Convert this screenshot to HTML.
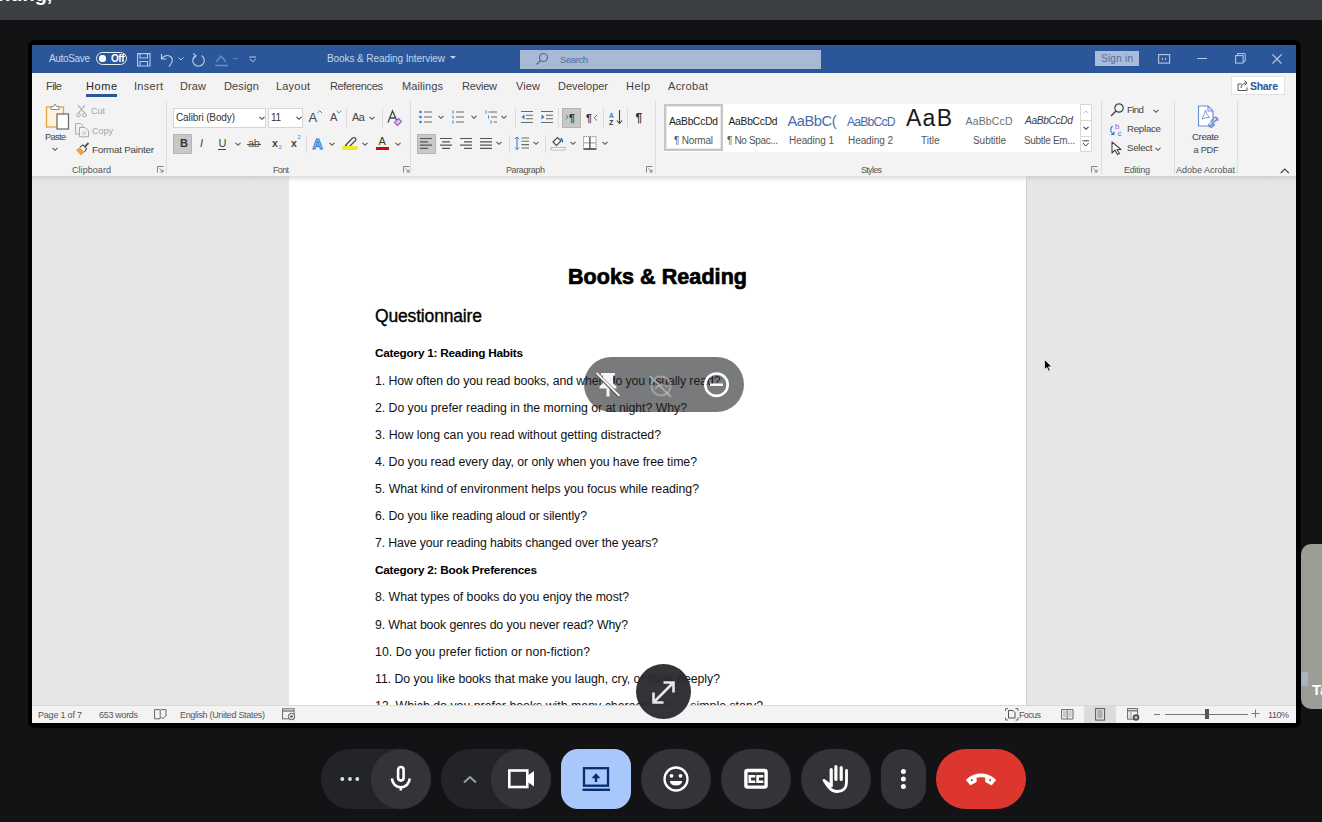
<!DOCTYPE html>
<html><head><meta charset="utf-8"><style>
html,body{margin:0;padding:0;width:1322px;height:822px;overflow:hidden;background:#131316;position:relative;font-family:"Liberation Sans",sans-serif;}
.t{position:absolute;white-space:pre;line-height:1;}
svg{position:absolute;overflow:visible;}
</style></head><body>
<div style="position:absolute;left:0px;top:0px;width:1322px;height:20px;background:#3c4043"></div>
<span class="t" style="left:-2px;top:-16.5px;font-size:20px;font-weight:bold;color:#fff;">nting,</span>
<div style="position:absolute;left:27.5px;top:40px;width:1273px;height:687.5px;background:#000;border-radius:7px"></div>
<div style="position:absolute;left:32px;top:45px;width:1264px;height:28px;background:#2b579a"></div>
<div style="position:absolute;left:32px;top:73px;width:1264px;height:103px;background:#f3f3f3"></div>
<div style="position:absolute;left:32px;top:176px;width:1264px;height:530px;background:#e6e6e6"></div>
<div style="position:absolute;left:32px;top:176px;width:1264px;height:6px;background:linear-gradient(#d0d0d0,#d8d8d8 30%,#e6e6e6)"></div>
<div style="position:absolute;left:289px;top:176px;width:737px;height:530px;background:#fff"></div>
<div style="position:absolute;left:289px;top:176px;width:737px;height:6px;background:linear-gradient(#dedede,#e8e8e8 30%,#fff)"></div>
<div style="position:absolute;left:1026px;top:176px;width:1px;height:530px;background:#cfcfcf"></div>
<div style="position:absolute;left:32px;top:705px;width:1264px;height:18px;background:#f3f3f3;border-top:1px solid #dadada;box-sizing:border-box;z-index:5"></div>
<div style="position:absolute;left:96px;top:52px;width:31px;height:13px;border:1.3px solid #e8eef7;border-radius:7px;box-sizing:border-box"></div>
<div style="position:absolute;left:99px;top:55px;width:6.5px;height:6.5px;background:#fff;border-radius:50%"></div>
<svg style="left:450px;top:56px" width="8" height="5"><path d="M0 0 L6 0 L3 3 Z" fill="#c5d3ea"/></svg>
<div style="position:absolute;left:520px;top:50px;width:301px;height:19px;background:#a7b9d5"></div>
<svg style="left:535px;top:52px" width="14" height="14"><circle cx="8.5" cy="5.5" r="4" fill="none" stroke="#4e6ea2" stroke-width="1.2"/><path d="M5.5 8.5 L1.5 12.5" stroke="#4e6ea2" stroke-width="1.3"/></svg>
<div style="position:absolute;left:1095px;top:51px;width:44px;height:15px;background:#a9bcda"></div>
<svg style="left:137px;top:53px" width="14" height="14"><path d="M0.6 0.6 H13 V13 H0.6 Z M3 0.6 V5 H10.5 V0.6 M3 13 V8.5 H10.5 V13" fill="none" stroke="#b9c9e3" stroke-width="1.1"/></svg>
<svg style="left:160px;top:53px" width="14" height="14"><path d="M1.5 1 V6 H6.5 M1.8 5.5 C4 2 9 1.5 11.5 4.5 C13.5 7 12 10 9 13.5" fill="none" stroke="#b9c9e3" stroke-width="1.2"/></svg>
<svg style="left:178px;top:57px" width="7" height="5"><path d="M0.5 0.5 L3 3 L5.5 0.5" fill="none" stroke="#b9c9e3" stroke-width="1"/></svg>
<svg style="left:191px;top:53px" width="15" height="15"><path d="M4.5 2.5 A5.8 5.8 0 1 0 10.5 2.5" fill="none" stroke="#b9c9e3" stroke-width="1.2"/><path d="M2.2 0.5 L5 2.8 L2.5 5.5" fill="none" stroke="#b9c9e3" stroke-width="1.2"/></svg>
<svg style="left:214px;top:53px" width="15" height="14"><path d="M2 9 L7 3 L12 9 M1 12.5 H14" fill="none" stroke="#6f8fc0" stroke-width="1.3"/></svg>
<div style="position:absolute;left:233px;top:58px;width:5px;height:1px;background:#5f80b5"></div>
<svg style="left:249px;top:56px" width="8" height="7"><path d="M0.5 1 H7 M0.8 3 L3.8 5.8 L6.8 3" fill="none" stroke="#b9c9e3" stroke-width="1"/></svg>
<svg style="left:1158px;top:53px" width="13" height="12"><rect x="0.6" y="1.6" width="11" height="8.5" fill="none" stroke="#b9c9e3" stroke-width="1.1"/><path d="M3.5 6 L5 4.5 V7.5 Z M8.5 6 L7 4.5 V7.5 Z" fill="#b9c9e3"/></svg>
<div style="position:absolute;left:1197px;top:58px;width:10px;height:1.2px;background:#b9c9e3"></div>
<svg style="left:1235px;top:53px" width="11" height="11"><rect x="0.6" y="2.6" width="7.5" height="7.5" fill="none" stroke="#b9c9e3" stroke-width="1"/><path d="M2.5 2.5 V0.6 H10.2 V8.3 H8.2" fill="none" stroke="#b9c9e3" stroke-width="1"/></svg>
<svg style="left:1272px;top:54px" width="10" height="10"><path d="M0.5 0.5 L9.5 9.5 M9.5 0.5 L0.5 9.5" stroke="#b9c9e3" stroke-width="1.1"/></svg>
<div style="position:absolute;left:86px;top:94px;width:31px;height:2.5px;background:#2b579a"></div>
<div style="position:absolute;left:1231px;top:76px;width:54px;height:19px;background:#fff;border:1px solid #e3e3e3;box-sizing:border-box"></div>
<div style="position:absolute;left:166px;top:101px;width:1px;height:73px;background:#dedede"></div>
<div style="position:absolute;left:410px;top:101px;width:1px;height:73px;background:#dedede"></div>
<div style="position:absolute;left:655px;top:101px;width:1px;height:73px;background:#dedede"></div>
<div style="position:absolute;left:1101px;top:101px;width:1px;height:73px;background:#dedede"></div>
<div style="position:absolute;left:1174px;top:101px;width:1px;height:73px;background:#dedede"></div>
<div style="position:absolute;left:1237px;top:101px;width:1px;height:73px;background:#dedede"></div>
<div style="position:absolute;left:321px;top:749px;width:110px;height:60px;background:#232427;border-radius:30px"></div>
<div style="position:absolute;left:371px;top:749px;width:60px;height:60px;background:#333437;border-radius:30px"></div>
<div style="position:absolute;left:441px;top:749px;width:110px;height:60px;background:#232427;border-radius:30px"></div>
<div style="position:absolute;left:491px;top:749px;width:60px;height:60px;background:#333437;border-radius:30px"></div>
<div style="position:absolute;left:561px;top:749px;width:70px;height:60px;background:#a8c7fa;border-radius:17px"></div>
<div style="position:absolute;left:641px;top:749px;width:70px;height:60px;background:#333437;border-radius:30px"></div>
<div style="position:absolute;left:721px;top:749px;width:70px;height:60px;background:#333437;border-radius:30px"></div>
<div style="position:absolute;left:801px;top:749px;width:70px;height:60px;background:#333437;border-radius:30px"></div>
<div style="position:absolute;left:881px;top:749px;width:45px;height:60px;background:#333437;border-radius:22px"></div>
<div style="position:absolute;left:936px;top:749px;width:90px;height:60px;background:#dc362e;border-radius:30px"></div>
<div style="position:absolute;left:1301px;top:544px;width:40px;height:165px;background:#9b9d97;border-radius:10px"></div>
<div style="position:absolute;left:1301px;top:672px;width:7px;height:14px;background:#aab3c2"></div>
<span class="t" style="left:1312px;top:682px;font-size:15px;font-weight:bold;color:#fff;line-height:1">Ta</span>
<svg style="left:45px;top:103px" width="26" height="28"><rect x="1.5" y="4" width="17" height="20" fill="#fdf3dc" stroke="#dca743" stroke-width="1.3"/><path d="M6 6.5 V3.5 H8.5 L10 1 L11.5 3.5 H14 V6.5 Z" fill="#fff" stroke="#8a8a8a" stroke-width="1"/><rect x="12" y="11" width="11.5" height="15" fill="#fff" stroke="#707070" stroke-width="1.3"/></svg>
<svg style="left:52px;top:147px" width="7" height="5"><path d="M0.5 0.8 L3 3.3 L5.5 0.8" fill="none" stroke="#555" stroke-width="1.1"/></svg>
<svg style="left:76px;top:104px" width="12" height="14"><path d="M2 1 L8.5 9 M9 1 L2.5 9" stroke="#a8a8a8" stroke-width="1.1" fill="none"/><circle cx="2.5" cy="11" r="1.8" fill="none" stroke="#a8a8a8" stroke-width="1"/><circle cx="8.5" cy="11" r="1.8" fill="none" stroke="#a8a8a8" stroke-width="1"/></svg>
<svg style="left:75px;top:123px" width="15" height="15"><path d="M0.6 0.6 H5.5 L7.5 2.5 V11 H0.6 Z" fill="none" stroke="#a8a8a8" stroke-width="1"/><path d="M4.5 4.5 H10 L13.5 8 V13.8 H4.5 Z" fill="#f3f3f3" stroke="#a8a8a8" stroke-width="1"/><path d="M7 9 H11 M7 11 H11" stroke="#b8b8b8" stroke-width="0.8"/></svg>
<svg style="left:75px;top:142px" width="15" height="15"><path d="M1 8 L6 13.5 L9.5 10 L5 5 Z" fill="#e8a14a"/><path d="M5 5 L8 3 L11.5 6.5 L9.5 10" fill="#fff" stroke="#555" stroke-width="1.1"/><path d="M10 4.5 L13.5 1" stroke="#555" stroke-width="1.8"/></svg>
<svg style="left:157px;top:166px" width="7" height="7"><path d="M0.5 6.5 V0.5 H6.5" fill="none" stroke="#777" stroke-width="0.9"/><path d="M2.5 2.5 L6 6 M3.5 6 H6 V3.5" fill="none" stroke="#777" stroke-width="0.9"/></svg>
<div style="position:absolute;left:173px;top:108px;width:93px;height:20px;background:#fff;border:1px solid #d4d4d4;box-sizing:border-box"></div>
<svg style="left:259px;top:116px" width="7" height="5"><path d="M0.5 0.8 L3 3.3 L5.5 0.8" fill="none" stroke="#444" stroke-width="1.1"/></svg>
<div style="position:absolute;left:268px;top:108px;width:35px;height:20px;background:#fff;border:1px solid #d4d4d4;box-sizing:border-box"></div>
<svg style="left:296px;top:116px" width="7" height="5"><path d="M0.5 0.8 L3 3.3 L5.5 0.8" fill="none" stroke="#444" stroke-width="1.1"/></svg>
<svg style="left:317px;top:110px" width="6" height="4"><path d="M0.5 3 L2.8 0.8 L5 3" fill="none" stroke="#2b88d8" stroke-width="1"/></svg>
<svg style="left:336px;top:110px" width="6" height="4"><path d="M0.5 0.8 L2.8 3 L5 0.8" fill="none" stroke="#2b88d8" stroke-width="1"/></svg>
<div style="position:absolute;left:346px;top:108px;width:1px;height:20px;background:#dcdcdc"></div>
<svg style="left:369px;top:116px" width="7" height="5"><path d="M0.5 0.8 L3 3.3 L5.5 0.8" fill="none" stroke="#555" stroke-width="1.1"/></svg>
<div style="position:absolute;left:382px;top:108px;width:1px;height:20px;background:#dcdcdc"></div>
<svg style="left:387px;top:110px" width="16" height="16"><path d="M1 12.5 L5.5 1 L9.5 10 M2.8 8 H8" fill="none" stroke="#444" stroke-width="1.3"/><path d="M7.5 12.5 L11.5 8.5 L14.5 11.5 L10.5 15.5 Z" fill="#e3c8ee" stroke="#9b5bb8" stroke-width="1.1"/></svg>
<div style="position:absolute;left:173px;top:134px;width:19px;height:19.5px;background:#c8c8c8;border:1px solid #b4b4b4;box-sizing:border-box"></div>
<div style="position:absolute;left:218px;top:149px;width:8px;height:1px;background:#444"></div>
<svg style="left:235px;top:142px" width="7" height="5"><path d="M0.5 0.8 L3 3.3 L5.5 0.8" fill="none" stroke="#555" stroke-width="1.1"/></svg>
<div style="position:absolute;left:247px;top:143.5px;width:14px;height:1px;background:#555"></div>
<div style="position:absolute;left:306px;top:135px;width:1px;height:18px;background:#dcdcdc"></div>
<svg style="left:329px;top:142px" width="7" height="5"><path d="M0.5 0.8 L3 3.3 L5.5 0.8" fill="none" stroke="#555" stroke-width="1.1"/></svg>
<svg style="left:342px;top:136px" width="16" height="15"><path d="M3.5 9.5 L10.5 2 Q12 1 13 2 L13.5 2.5 Q14.5 3.5 13.5 4.5 L6.5 11.5 Z" fill="#f3f3f3" stroke="#444" stroke-width="1.2"/><path d="M3.5 9.5 L2 12 L6.5 11.5 Z" fill="#444"/></svg>
<div style="position:absolute;left:342px;top:146px;width:16px;height:4px;background:#ecec1e;border-radius:2px"></div>
<svg style="left:362px;top:142px" width="7" height="5"><path d="M0.5 0.8 L3 3.3 L5.5 0.8" fill="none" stroke="#555" stroke-width="1.1"/></svg>
<div style="position:absolute;left:376px;top:146.5px;width:13px;height:3.5px;background:#c80a0a"></div>
<svg style="left:395px;top:142px" width="7" height="5"><path d="M0.5 0.8 L3 3.3 L5.5 0.8" fill="none" stroke="#555" stroke-width="1.1"/></svg>
<svg style="left:403px;top:166px" width="7" height="7"><path d="M0.5 6.5 V0.5 H6.5" fill="none" stroke="#777" stroke-width="0.9"/><path d="M2.5 2.5 L6 6 M3.5 6 H6 V3.5" fill="none" stroke="#777" stroke-width="0.9"/></svg>
<svg style="left:418px;top:110px" width="16" height="14"><circle cx="2.5" cy="2" r="1.3" fill="#2b7cd3"/><circle cx="2.5" cy="7" r="1.3" fill="#2b7cd3"/><circle cx="2.5" cy="12" r="1.3" fill="#2b7cd3"/><path d="M6 2 H14 M6 7 H14 M6 12 H14" stroke="#6b6b6b" stroke-width="1.1"/></svg>
<svg style="left:438px;top:115px" width="7" height="5"><path d="M0.5 0.8 L3 3.3 L5.5 0.8" fill="none" stroke="#555" stroke-width="1.1"/></svg>
<svg style="left:450px;top:110px" width="16" height="14"><path d="M3 0.5 V3.5 M3 5.5 V8.5 M3 10.5 V13.5" stroke="#2b7cd3" stroke-width="1"/><path d="M6 2 H14 M6 7 H14 M6 12 H14" stroke="#6b6b6b" stroke-width="1.1"/></svg>
<svg style="left:471px;top:115px" width="7" height="5"><path d="M0.5 0.8 L3 3.3 L5.5 0.8" fill="none" stroke="#555" stroke-width="1.1"/></svg>
<svg style="left:484px;top:110px" width="15" height="15"><path d="M2 0.5 V3.5 M4.5 5.5 V8.5 M7 10.5 V13.5" stroke="#2b7cd3" stroke-width="1"/><path d="M4.5 2 H13 M7 7 H13 M9.5 12 H13" stroke="#6b6b6b" stroke-width="1.1"/></svg>
<svg style="left:501px;top:115px" width="7" height="5"><path d="M0.5 0.8 L3 3.3 L5.5 0.8" fill="none" stroke="#555" stroke-width="1.1"/></svg>
<div style="position:absolute;left:515px;top:108px;width:1px;height:20px;background:#dcdcdc"></div>
<svg style="left:520px;top:110px" width="14" height="14"><path d="M1 1.5 H13 M6 5.2 H13 M6 8.8 H13 M1 12.5 H13" stroke="#6b6b6b" stroke-width="1.1"/><path d="M4.5 4.5 L1.5 7 L4.5 9.5 Z" fill="#2b7cd3"/></svg>
<svg style="left:540px;top:110px" width="14" height="14"><path d="M1 1.5 H13 M6 5.2 H13 M6 8.8 H13 M1 12.5 H13" stroke="#6b6b6b" stroke-width="1.1"/><path d="M1.5 4.5 L4.5 7 L1.5 9.5 Z" fill="#2b7cd3"/></svg>
<div style="position:absolute;left:558px;top:108px;width:1px;height:20px;background:#dcdcdc"></div>
<div style="position:absolute;left:562px;top:108px;width:18.5px;height:19.5px;background:#c8c8c8;border:1px solid #b4b4b4;box-sizing:border-box"></div>
<svg style="left:565px;top:112px" width="13" height="11"><path d="M0.8 3 L3 5.2 L0.8 7.4" fill="none" stroke="#2b7cd3" stroke-width="1"/></svg>
<svg style="left:593px;top:114px" width="5" height="8"><path d="M4 1 L1.2 3.8 L4 6.6" fill="none" stroke="#2b7cd3" stroke-width="1"/></svg>
<div style="position:absolute;left:603px;top:108px;width:1px;height:20px;background:#dcdcdc"></div>
<svg style="left:616px;top:109px" width="7" height="16"><path d="M3.5 1 V14.5 M0.8 11.5 L3.5 14.5 L6.2 11.5" fill="none" stroke="#444" stroke-width="1.1"/></svg>
<div style="position:absolute;left:627px;top:108px;width:1px;height:20px;background:#dcdcdc"></div>
<div style="position:absolute;left:417px;top:134px;width:19px;height:19.5px;background:#c8c8c8;border:1px solid #b4b4b4;box-sizing:border-box"></div>
<svg style="left:420px;top:137px" width="14" height="13"><path d="M0 1.5 H12M0 4.8 H8M0 8.1 H12M0 11.4 H8" stroke="#555" stroke-width="1.2"/></svg>
<svg style="left:440px;top:137px" width="14" height="13"><path d="M0 1.5 H12M2 4.8 H10M0 8.1 H12M2 11.4 H10" stroke="#555" stroke-width="1.2"/></svg>
<svg style="left:460px;top:137px" width="14" height="13"><path d="M0 1.5 H12M4 4.8 H12M0 8.1 H12M4 11.4 H12" stroke="#555" stroke-width="1.2"/></svg>
<svg style="left:480px;top:137px" width="14" height="13"><path d="M0 1.5 H12M0 4.8 H12M0 8.1 H12M0 11.4 H12" stroke="#555" stroke-width="1.2"/></svg>
<svg style="left:496px;top:141px" width="7" height="5"><path d="M0.5 0.8 L3 3.3 L5.5 0.8" fill="none" stroke="#555" stroke-width="1.1"/></svg>
<div style="position:absolute;left:509px;top:135px;width:1px;height:18px;background:#dcdcdc"></div>
<svg style="left:514px;top:136px" width="16" height="15"><path d="M3 1 V13.5 M1 3 L3 1 L5 3 M1 11.5 L3 13.5 L5 11.5" fill="none" stroke="#2b7cd3" stroke-width="1"/><path d="M7.5 2 H15 M7.5 5.3 H15 M7.5 8.6 H15 M7.5 12 H15" stroke="#6b6b6b" stroke-width="1.1"/></svg>
<svg style="left:533px;top:141px" width="7" height="5"><path d="M0.5 0.8 L3 3.3 L5.5 0.8" fill="none" stroke="#555" stroke-width="1.1"/></svg>
<div style="position:absolute;left:545px;top:135px;width:1px;height:18px;background:#dcdcdc"></div>
<svg style="left:550px;top:135px" width="16" height="16"><path d="M3 7 L7.5 2.5 L11 6 L6.5 10.5 Z" fill="#fff" stroke="#444" stroke-width="1.1"/><path d="M10.5 3.5 Q13 4 12.5 7.5" fill="none" stroke="#2b7cd3" stroke-width="1.3"/><rect x="1" y="12.5" width="14" height="2.5" fill="#fff" stroke="#aaa" stroke-width="0.8"/></svg>
<svg style="left:570px;top:141px" width="7" height="5"><path d="M0.5 0.8 L3 3.3 L5.5 0.8" fill="none" stroke="#555" stroke-width="1.1"/></svg>
<svg style="left:583px;top:136px" width="14" height="14"><rect x="0.6" y="0.6" width="12.5" height="12.5" fill="#fff" stroke="#777" stroke-width="1" stroke-dasharray="1.2 1"/><path d="M6.9 0.6 V13 M0.6 6.9 H13" stroke="#888" stroke-width="0.9"/><path d="M0.6 13 H13.2" stroke="#444" stroke-width="1.5"/><path d="M6.9 1 V13" stroke="#444" stroke-width="1"/></svg>
<svg style="left:602px;top:141px" width="7" height="5"><path d="M0.5 0.8 L3 3.3 L5.5 0.8" fill="none" stroke="#555" stroke-width="1.1"/></svg>
<svg style="left:646px;top:166px" width="7" height="7"><path d="M0.5 6.5 V0.5 H6.5" fill="none" stroke="#777" stroke-width="0.9"/><path d="M2.5 2.5 L6 6 M3.5 6 H6 V3.5" fill="none" stroke="#777" stroke-width="0.9"/></svg>
<div style="position:absolute;left:663.5px;top:103.5px;width:416px;height:48px;background:#fff"></div>
<div style="position:absolute;left:663.5px;top:103.5px;width:59.5px;height:47.5px;border:2px solid #c6c6c6;box-sizing:border-box;background:#fff"></div>
<div style="position:absolute;left:665.5px;top:105.5px;width:55.5px;height:43.5px;border:1px solid #e8e8e8;box-sizing:border-box"></div>
<div style="position:absolute;left:1079.5px;top:103.5px;width:12.5px;height:48px;background:#fff;border:1px solid #d8d8d8;box-sizing:border-box"></div>
<div style="position:absolute;left:1079.5px;top:119.5px;width:12.5px;height:1px;background:#d8d8d8"></div>
<div style="position:absolute;left:1079.5px;top:135.5px;width:12.5px;height:1px;background:#d8d8d8"></div>
<svg style="left:1083px;top:110px" width="7" height="5"><path d="M0.5 3.5 L3 1 L5.5 3.5" fill="none" stroke="#c4c4c4" stroke-width="1"/></svg>
<svg style="left:1083px;top:126px" width="7" height="5"><path d="M0.5 0.8 L3 3.3 L5.5 0.8" fill="none" stroke="#444" stroke-width="1.1"/></svg>
<svg style="left:1082px;top:140px" width="8" height="8"><path d="M0.5 0.8 H7 M1 3 L3.8 6 L6.6 3" fill="none" stroke="#444" stroke-width="1"/></svg>
<svg style="left:1091px;top:166px" width="7" height="7"><path d="M0.5 6.5 V0.5 H6.5" fill="none" stroke="#777" stroke-width="0.9"/><path d="M2.5 2.5 L6 6 M3.5 6 H6 V3.5" fill="none" stroke="#777" stroke-width="0.9"/></svg>
<svg style="left:1110px;top:103px" width="15" height="14"><circle cx="9" cy="5" r="4.2" fill="none" stroke="#444" stroke-width="1.2"/><path d="M6 8 L1 13" stroke="#444" stroke-width="1.4"/></svg>
<svg style="left:1153px;top:109px" width="7" height="5"><path d="M0.5 0.8 L3 3.3 L5.5 0.8" fill="none" stroke="#555" stroke-width="1.1"/></svg>
<svg style="left:1109px;top:122px" width="15" height="15"><text x="6" y="6.5" font-size="8" font-family="Liberation Sans" fill="#b146c2">b</text><text x="8.5" y="13.5" font-size="8" font-family="Liberation Sans" fill="#2b7cd3">c</text><path d="M3.5 4 Q0.5 7 2.5 10.5 L4.5 12 M2 12.5 H5 V9.5" fill="none" stroke="#2b7cd3" stroke-width="1.1"/></svg>
<svg style="left:1111px;top:141px" width="11" height="14"><path d="M1 1 V12 L4 9 L6.5 13.5 L8.5 12.5 L6 8.5 H10 Z" fill="#fff" stroke="#444" stroke-width="1.1" stroke-linejoin="round"/></svg>
<svg style="left:1155px;top:147px" width="7" height="5"><path d="M0.5 0.8 L3 3.3 L5.5 0.8" fill="none" stroke="#555" stroke-width="1.1"/></svg>
<svg style="left:1197px;top:105px" width="24" height="25"><path d="M1.5 1 H11 L16 6 V21 H1.5 Z" fill="#fff" stroke="#6d8fd8" stroke-width="1.2"/><path d="M11 1 V6 H16" fill="none" stroke="#6d8fd8" stroke-width="1.1"/><path d="M5 14 Q8 8 8.5 5 Q9 9 12.5 12.5 Q8 12 5 14 Z" fill="none" stroke="#6d8fd8" stroke-width="0.9"/><path d="M13 21 L20 14 M14.5 18 Q13 16.5 15 15 L17 13 Q18.5 11.5 20 13 Q21.5 14.5 20 16" fill="none" stroke="#6d8fd8" stroke-width="1.3"/><path d="M12.5 18.5 Q11 20 12.5 21.5 Q14 23 15.5 21.5 L18 19" fill="none" stroke="#6d8fd8" stroke-width="1.3"/></svg>
<svg style="left:1280px;top:168px" width="10" height="6"><path d="M0.8 5 L4.8 1 L8.8 5" fill="none" stroke="#444" stroke-width="1.1"/></svg>
<svg style="left:1237px;top:79px" width="12" height="13"><path d="M4.5 5 H1 V11.5 H10 V8.5" fill="none" stroke="#555" stroke-width="1"/><path d="M4 9 Q4.5 4 9.5 4 M7.5 1.5 L10 4 L7.5 6.5" fill="none" stroke="#555" stroke-width="1"/></svg>
<span id="t0" class="t" style="left:49px;top:53.53px;font-size:10px;color:#c5d3ea;font-family:'Liberation Sans',sans-serif;letter-spacing:-0.339px;">AutoSave</span>
<span id="t1" class="t" style="left:111px;top:53.83px;font-size:10px;color:#fff;font-family:'Liberation Sans',sans-serif;letter-spacing:-0.477px;font-weight:bold">Off</span>
<span id="t2" class="t" style="left:327px;top:53.53px;font-size:10px;color:#c5d3ea;font-family:'Liberation Sans',sans-serif;letter-spacing:-0.087px;">Books &amp; Reading Interview</span>
<span id="t3" class="t" style="left:560px;top:54.96px;font-size:9.5px;color:#4e6ea2;font-family:'Liberation Sans',sans-serif;letter-spacing:-0.422px;">Search</span>
<span id="t4" class="t" style="left:1101px;top:54.03px;font-size:10px;color:#4e6ea2;font-family:'Liberation Sans',sans-serif;letter-spacing:0.237px;">Sign in</span>
<span id="t5" class="t" style="left:46px;top:80.69px;font-size:11px;color:#444;font-family:'Liberation Sans',sans-serif;letter-spacing:-0.578px;">File</span>
<span id="t6" class="t" style="left:86px;top:80.69px;font-size:11px;color:#262626;font-family:'Liberation Sans',sans-serif;letter-spacing:0.552px;">Home</span>
<span id="t7" class="t" style="left:134px;top:80.69px;font-size:11px;color:#444;font-family:'Liberation Sans',sans-serif;letter-spacing:0.297px;">Insert</span>
<span id="t8" class="t" style="left:180px;top:80.69px;font-size:11px;color:#444;font-family:'Liberation Sans',sans-serif;letter-spacing:0.109px;">Draw</span>
<span id="t9" class="t" style="left:224px;top:80.69px;font-size:11px;color:#444;font-family:'Liberation Sans',sans-serif;letter-spacing:0.150px;">Design</span>
<span id="t10" class="t" style="left:276px;top:80.69px;font-size:11px;color:#444;font-family:'Liberation Sans',sans-serif;letter-spacing:0.194px;">Layout</span>
<span id="t11" class="t" style="left:330px;top:80.69px;font-size:11px;color:#444;font-family:'Liberation Sans',sans-serif;letter-spacing:-0.363px;">References</span>
<span id="t12" class="t" style="left:402px;top:80.69px;font-size:11px;color:#444;font-family:'Liberation Sans',sans-serif;letter-spacing:0.092px;">Mailings</span>
<span id="t13" class="t" style="left:462px;top:80.69px;font-size:11px;color:#444;font-family:'Liberation Sans',sans-serif;letter-spacing:-0.216px;">Review</span>
<span id="t14" class="t" style="left:516px;top:80.69px;font-size:11px;color:#444;font-family:'Liberation Sans',sans-serif;letter-spacing:0.115px;">View</span>
<span id="t15" class="t" style="left:558px;top:80.69px;font-size:11px;color:#444;font-family:'Liberation Sans',sans-serif;letter-spacing:-0.018px;">Developer</span>
<span id="t16" class="t" style="left:626px;top:80.69px;font-size:11px;color:#444;font-family:'Liberation Sans',sans-serif;letter-spacing:0.458px;">Help</span>
<span id="t17" class="t" style="left:668px;top:80.69px;font-size:11px;color:#444;font-family:'Liberation Sans',sans-serif;letter-spacing:0.346px;">Acrobat</span>
<span id="t18" class="t" style="left:1250px;top:81.11px;font-size:10.5px;color:#2b579a;font-family:'Liberation Sans',sans-serif;letter-spacing:-0.297px;font-weight:bold">Share</span>
<span id="t19" class="t" style="left:72px;top:166.18px;font-size:9px;color:#555;font-family:'Liberation Sans',sans-serif;letter-spacing:0.059px;">Clipboard</span>
<span id="t20" class="t" style="left:273px;top:166.18px;font-size:9px;color:#555;font-family:'Liberation Sans',sans-serif;letter-spacing:-0.672px;">Font</span>
<span id="t21" class="t" style="left:506px;top:166.18px;font-size:9px;color:#555;font-family:'Liberation Sans',sans-serif;letter-spacing:-0.379px;">Paragraph</span>
<span id="t22" class="t" style="left:861px;top:166.18px;font-size:9px;color:#555;font-family:'Liberation Sans',sans-serif;letter-spacing:-0.703px;">Styles</span>
<span id="t23" class="t" style="left:1124px;top:166.18px;font-size:9px;color:#555;font-family:'Liberation Sans',sans-serif;letter-spacing:-0.255px;">Editing</span>
<span id="t24" class="t" style="left:1176px;top:166.18px;font-size:9px;color:#555;font-family:'Liberation Sans',sans-serif;letter-spacing:-0.004px;">Adobe Acrobat</span>
<span id="t25" class="t" style="left:568px;top:266.80px;font-size:21.5px;color:#000;font-family:'Liberation Sans',sans-serif;letter-spacing:0.071px;font-weight:bold;-webkit-text-stroke:0.7px #000">Books &amp; Reading</span>
<span id="t26" class="t" style="left:375px;top:307.69px;font-size:17.5px;color:#000;font-family:'Liberation Sans',sans-serif;letter-spacing:-0.164px;-webkit-text-stroke:0.35px #000">Questionnaire</span>
<span id="t27" class="t" style="left:375px;top:348.01px;font-size:11.8px;color:#000;font-family:'Liberation Sans',sans-serif;letter-spacing:-0.242px;font-weight:bold">Category 1: Reading Habits</span>
<span id="t28" class="t" style="left:375px;top:374.59px;font-size:12.3px;color:#111;font-family:'Liberation Sans',sans-serif;letter-spacing:-0.087px;">1. How often do you read books, and when do you usually read?</span>
<span id="t29" class="t" style="left:375px;top:401.59px;font-size:12.3px;color:#111;font-family:'Liberation Sans',sans-serif;letter-spacing:-0.031px;">2. Do you prefer reading in the morning or at night? Why?</span>
<span id="t30" class="t" style="left:375px;top:428.79px;font-size:12.3px;color:#111;font-family:'Liberation Sans',sans-serif;letter-spacing:0.005px;">3. How long can you read without getting distracted?</span>
<span id="t31" class="t" style="left:375px;top:455.69px;font-size:12.3px;color:#111;font-family:'Liberation Sans',sans-serif;letter-spacing:-0.043px;">4. Do you read every day, or only when you have free time?</span>
<span id="t32" class="t" style="left:375px;top:482.99px;font-size:12.3px;color:#111;font-family:'Liberation Sans',sans-serif;letter-spacing:-0.012px;">5. What kind of environment helps you focus while reading?</span>
<span id="t33" class="t" style="left:375px;top:510.09px;font-size:12.3px;color:#111;font-family:'Liberation Sans',sans-serif;letter-spacing:-0.066px;">6. Do you like reading aloud or silently?</span>
<span id="t34" class="t" style="left:375px;top:537.19px;font-size:12.3px;color:#111;font-family:'Liberation Sans',sans-serif;letter-spacing:-0.123px;">7. Have your reading habits changed over the years?</span>
<span id="t35" class="t" style="left:375px;top:564.81px;font-size:11.8px;color:#000;font-family:'Liberation Sans',sans-serif;letter-spacing:-0.241px;font-weight:bold">Category 2: Book Preferences</span>
<span id="t36" class="t" style="left:375px;top:591.49px;font-size:12.3px;color:#111;font-family:'Liberation Sans',sans-serif;letter-spacing:-0.038px;">8. What types of books do you enjoy the most?</span>
<span id="t37" class="t" style="left:375px;top:618.59px;font-size:12.3px;color:#111;font-family:'Liberation Sans',sans-serif;letter-spacing:-0.112px;">9. What book genres do you never read? Why?</span>
<span id="t38" class="t" style="left:375px;top:645.69px;font-size:12.3px;color:#111;font-family:'Liberation Sans',sans-serif;letter-spacing:0.077px;">10. Do you prefer fiction or non-fiction?</span>
<span id="t39" class="t" style="left:375px;top:672.79px;font-size:12.3px;color:#111;font-family:'Liberation Sans',sans-serif;letter-spacing:-0.028px;">11. Do you like books that make you laugh, cry, or think deeply?</span>
<span id="t40" class="t" style="left:375px;top:699.89px;font-size:12.3px;color:#111;font-family:'Liberation Sans',sans-serif;letter-spacing:0.017px;">12. Which do you prefer books with many characters or a simple story?</span>
<span id="t41" class="t" style="left:38px;top:711.38px;font-size:9px;color:#555;font-family:'Liberation Sans',sans-serif;letter-spacing:-0.205px;z-index:6">Page 1 of 7</span>
<span id="t42" class="t" style="left:99px;top:711.38px;font-size:9px;color:#555;font-family:'Liberation Sans',sans-serif;letter-spacing:-0.316px;z-index:6">653 words</span>
<span id="t43" class="t" style="left:180px;top:711.38px;font-size:9px;color:#555;font-family:'Liberation Sans',sans-serif;letter-spacing:-0.320px;z-index:6">English (United States)</span>
<span id="t44" class="t" style="left:1019px;top:711.38px;font-size:9px;color:#555;font-family:'Liberation Sans',sans-serif;letter-spacing:-0.629px;z-index:6">Focus</span>
<span id="t45" class="t" style="left:1268px;top:711.38px;font-size:9px;color:#555;font-family:'Liberation Sans',sans-serif;letter-spacing:-0.453px;z-index:6">110%</span>
<span id="t46" class="t" style="left:45px;top:132.71px;font-size:9.2px;color:#444;font-family:'Liberation Sans',sans-serif;letter-spacing:-0.625px;">Paste</span>
<span id="t47" class="t" style="left:91px;top:106.71px;font-size:9.2px;color:#a6a6a6;font-family:'Liberation Sans',sans-serif;letter-spacing:-0.156px;">Cut</span>
<span id="t48" class="t" style="left:92px;top:126.71px;font-size:9.2px;color:#a6a6a6;font-family:'Liberation Sans',sans-serif;letter-spacing:-0.151px;">Copy</span>
<span id="t49" class="t" style="left:92px;top:145.20px;font-size:9.8px;color:#444;font-family:'Liberation Sans',sans-serif;letter-spacing:-0.215px;">Format Painter</span>
<span id="t50" class="t" style="left:176px;top:112.53px;font-size:10px;color:#333;font-family:'Liberation Sans',sans-serif;letter-spacing:-0.121px;">Calibri (Body)</span>
<span id="t51" class="t" style="left:271px;top:112.53px;font-size:10px;color:#333;font-family:'Liberation Sans',sans-serif;letter-spacing:-0.391px;">11</span>
<span id="t52" class="t" style="left:308.5px;top:110.50px;font-size:13px;color:#444;font-family:'Liberation Sans',sans-serif;letter-spacing:0.828px;">A</span>
<span id="t53" class="t" style="left:330px;top:112.19px;font-size:11px;color:#444;font-family:'Liberation Sans',sans-serif;letter-spacing:-0.344px;">A</span>
<span id="t54" class="t" style="left:352px;top:112.19px;font-size:11px;color:#444;font-family:'Liberation Sans',sans-serif;letter-spacing:-0.469px;">Aa</span>
<span id="t55" class="t" style="left:180px;top:137.69px;font-size:11px;color:#333;font-family:'Liberation Sans',sans-serif;letter-spacing:-1.453px;font-weight:bold">B</span>
<span id="t56" class="t" style="left:200px;top:137.69px;font-size:11px;color:#444;font-family:'Liberation Sans',sans-serif;letter-spacing:2.438px;font-style:italic;font-family:"Liberation Serif",serif">I</span>
<span id="t57" class="t" style="left:218.5px;top:137.69px;font-size:11px;color:#444;font-family:'Liberation Sans',sans-serif;letter-spacing:-0.953px;">U</span>
<span id="t58" class="t" style="left:248px;top:137.69px;font-size:11px;color:#555;font-family:'Liberation Sans',sans-serif;letter-spacing:-0.250px;">ab</span>
<span id="t59" class="t" style="left:272px;top:138.11px;font-size:10.5px;color:#444;font-family:'Liberation Sans',sans-serif;letter-spacing:0.156px;font-weight:bold">x</span>
<span id="t60" class="t" style="left:278.5px;top:144.42px;font-size:6px;color:#2b88d8;font-family:'Liberation Sans',sans-serif;letter-spacing:-0.844px;">2</span>
<span id="t61" class="t" style="left:291px;top:138.11px;font-size:10.5px;color:#444;font-family:'Liberation Sans',sans-serif;letter-spacing:0.156px;font-weight:bold">x</span>
<span id="t62" class="t" style="left:297.5px;top:134.42px;font-size:6px;color:#2b88d8;font-family:'Liberation Sans',sans-serif;letter-spacing:-0.844px;">2</span>
<span id="t63" class="t" style="left:312.5px;top:137.15px;font-size:14px;color:#bfe0f6;font-family:'Liberation Sans',sans-serif;letter-spacing:1.375px;font-weight:bold;-webkit-text-stroke:1px #2b7cd3">A</span>
<span id="t64" class="t" style="left:378.5px;top:136.19px;font-size:11px;color:#333;font-family:'Liberation Sans',sans-serif;letter-spacing:0.156px;">A</span>
<span id="t65" class="t" style="left:569px;top:112.61px;font-size:10.5px;color:#333;font-family:'Liberation Sans',sans-serif;letter-spacing:1.656px;font-weight:bold">¶</span>
<span id="t66" class="t" style="left:586px;top:112.61px;font-size:10.5px;color:#333;font-family:'Liberation Sans',sans-serif;letter-spacing:1.156px;font-weight:bold">¶</span>
<span id="t67" class="t" style="left:609px;top:112.50px;font-size:6.5px;color:#2b7cd3;font-family:'Liberation Sans',sans-serif;letter-spacing:0.297px;font-weight:bold">A</span>
<span id="t68" class="t" style="left:609px;top:118.57px;font-size:7px;color:#333;font-family:'Liberation Sans',sans-serif;letter-spacing:1.719px;font-weight:bold">Z</span>
<span id="t69" class="t" style="left:635.5px;top:111.84px;font-size:12px;color:#333;font-family:'Liberation Sans',sans-serif;letter-spacing:0.812px;font-weight:bold">¶</span>
<span id="t70" class="t" style="left:669px;top:116.67px;font-size:10.2px;color:#222;font-family:'Liberation Sans',sans-serif;letter-spacing:-0.201px;">AaBbCcDd</span>
<span id="t71" class="t" style="left:674px;top:136.03px;font-size:10px;color:#555;font-family:'Liberation Sans',sans-serif;letter-spacing:-0.199px;">¶ Normal</span>
<span id="t72" class="t" style="left:728.5px;top:116.67px;font-size:10.2px;color:#222;font-family:'Liberation Sans',sans-serif;letter-spacing:-0.201px;">AaBbCcDd</span>
<span id="t73" class="t" style="left:727px;top:136.03px;font-size:10px;color:#555;font-family:'Liberation Sans',sans-serif;letter-spacing:-0.349px;">¶ No Spac...</span>
<span id="t74" class="t" style="left:787.5px;top:113.84px;font-size:14.6px;color:#4a6aa8;font-family:'Liberation Sans',sans-serif;letter-spacing:-0.422px;">AaBbC(</span>
<span id="t75" class="t" style="left:789px;top:136.03px;font-size:10px;color:#555;font-family:'Liberation Sans',sans-serif;letter-spacing:-0.074px;">Heading 1</span>
<span id="t76" class="t" style="left:847px;top:115.67px;font-size:12.2px;color:#4a6aa8;font-family:'Liberation Sans',sans-serif;letter-spacing:-0.836px;">AaBbCcD</span>
<span id="t77" class="t" style="left:848px;top:136.03px;font-size:10px;color:#555;font-family:'Liberation Sans',sans-serif;letter-spacing:-0.074px;">Heading 2</span>
<span id="t78" class="t" style="left:906px;top:106.53px;font-size:23px;color:#1a1a1a;font-family:'Liberation Sans',sans-serif;letter-spacing:1.258px;-webkit-text-stroke:0px">AaB</span>
<span id="t79" class="t" style="left:921px;top:136.03px;font-size:10px;color:#555;font-family:'Liberation Sans',sans-serif;letter-spacing:-0.008px;">Title</span>
<span id="t80" class="t" style="left:965.5px;top:116.11px;font-size:10.5px;color:#6e6e6e;font-family:'Liberation Sans',sans-serif;letter-spacing:0.148px;">AaBbCcD</span>
<span id="t81" class="t" style="left:973px;top:136.03px;font-size:10px;color:#555;font-family:'Liberation Sans',sans-serif;letter-spacing:-0.051px;">Subtitle</span>
<span id="t82" class="t" style="left:1025px;top:116.37px;font-size:10.2px;color:#404040;font-family:'Liberation Sans',sans-serif;letter-spacing:-0.344px;font-style:italic">AaBbCcDd</span>
<span id="t83" class="t" style="left:1024px;top:136.03px;font-size:10px;color:#555;font-family:'Liberation Sans',sans-serif;letter-spacing:-0.315px;">Subtle Em...</span>
<span id="t84" class="t" style="left:1127px;top:104.99px;font-size:9.7px;color:#444;font-family:'Liberation Sans',sans-serif;letter-spacing:-0.620px;">Find</span>
<span id="t85" class="t" style="left:1127px;top:123.99px;font-size:9.7px;color:#444;font-family:'Liberation Sans',sans-serif;letter-spacing:-0.258px;">Replace</span>
<span id="t86" class="t" style="left:1127px;top:143.39px;font-size:9.7px;color:#444;font-family:'Liberation Sans',sans-serif;letter-spacing:-0.287px;">Select</span>
<span id="t87" class="t" style="left:1192px;top:132.49px;font-size:9.7px;color:#444;font-family:'Liberation Sans',sans-serif;letter-spacing:-0.416px;">Create</span>
<span id="t88" class="t" style="left:1193.5px;top:146.11px;font-size:9.2px;color:#444;font-family:'Liberation Sans',sans-serif;letter-spacing:-0.262px;">a PDF</span>
<div style="position:absolute;left:584px;top:357px;width:160px;height:55px;background:rgba(32,33,36,0.6);border-radius:28px;z-index:10"></div>
<div style="position:absolute;left:636px;top:664px;width:55px;height:55px;background:rgba(40,41,44,0.95);border-radius:50%;z-index:10"></div>
<svg style="left:154px;top:709px;z-index:6" width="13" height="11"><path d="M0.6 0.6 H5 Q6 0.6 6.2 1.5 Q6.4 0.6 7.5 0.6 H12 V7 M0.6 0.6 V9.8 H6.2 M6.2 1.5 V9.8" fill="none" stroke="#666" stroke-width="1"/><path d="M7.5 8 L9 9.8 L12 6.5" fill="none" stroke="#666" stroke-width="1"/></svg>
<svg style="left:282px;top:708px;z-index:6" width="14" height="13"><rect x="0.6" y="0.8" width="11.5" height="10" fill="none" stroke="#666" stroke-width="1"/><path d="M0.6 3 H12" stroke="#666" stroke-width="1.2"/><circle cx="9.5" cy="8.5" r="3.2" fill="#f3f3f3" stroke="#555" stroke-width="1"/><circle cx="9.5" cy="8.5" r="1.3" fill="#555"/></svg>
<svg style="left:1005px;top:708px;z-index:6" width="14" height="13"><path d="M0.6 3 V0.6 H3 M10.5 0.6 H13 V3 M13 9.5 V12 H10.5 M3 12 H0.6 V9.5" fill="none" stroke="#666" stroke-width="1"/><path d="M3.5 2.5 H8 L10 4.5 V10 H3.5 Z" fill="none" stroke="#555" stroke-width="1"/></svg>
<svg style="left:1061px;top:709px;z-index:6" width="13" height="11"><path d="M0.6 0.6 H6.2 V10 H0.6 Z M6.2 0.6 H12 V10 H6.2" fill="none" stroke="#666" stroke-width="1"/><path d="M2 3 H5 M2 5 H5 M2 7 H5 M7.5 3 H10.5 M7.5 5 H10.5 M7.5 7 H10.5" stroke="#888" stroke-width="0.8"/></svg>
<div style="position:absolute;left:1084px;top:706px;width:32px;height:16.5px;background:#dcdcdc;z-index:5"></div>
<svg style="left:1095px;top:708px;z-index:6" width="11" height="13"><rect x="0.6" y="0.6" width="9" height="11.5" fill="none" stroke="#555" stroke-width="1"/><path d="M2.5 3 H7.5 M2.5 5 H7.5 M2.5 7 H7.5 M2.5 9 H7.5" stroke="#666" stroke-width="0.8"/></svg>
<svg style="left:1127px;top:708px;z-index:6" width="13" height="13"><rect x="0.6" y="0.6" width="10" height="10.5" fill="none" stroke="#666" stroke-width="1"/><path d="M0.6 2.8 H10.6" stroke="#666" stroke-width="1.2"/><path d="M2.5 5 H5 M2.5 7 H5 M2.5 9 H5" stroke="#888" stroke-width="0.8"/><circle cx="9" cy="9.5" r="3.3" fill="#555"/><path d="M9 8 V11 M7.6 9.5 H10.4" stroke="#f3f3f3" stroke-width="0.8"/></svg>
<div style="position:absolute;left:1154px;top:713.5px;width:6px;height:1px;background:#777;z-index:6"></div>
<div style="position:absolute;left:1165px;top:713.5px;width:83px;height:1px;background:#777;z-index:6"></div>
<div style="position:absolute;left:1205px;top:709px;width:3.5px;height:10px;background:#555;z-index:6"></div>
<svg style="left:1251px;top:709px;z-index:6" width="9" height="9"><path d="M4.5 0.5 V8.5 M0.5 4.5 H8.5" stroke="#777" stroke-width="1"/></svg>
<svg style="left:336px;top:774px" width="26" height="10"><circle cx="6.3" cy="5" r="1.9" fill="#d3e3fd"/><circle cx="14" cy="5" r="1.9" fill="#d3e3fd"/><circle cx="21.3" cy="5" r="1.9" fill="#d3e3fd"/></svg>
<svg style="left:389px;top:764px" width="24" height="28"><rect x="9.1" y="3" width="5.5" height="13.6" rx="2.75" fill="none" stroke="#fff" stroke-width="2.6"/><path d="M3 14.5 A8.8 8.8 0 0 0 20.6 14.5" fill="none" stroke="#fff" stroke-width="2.6"/><path d="M11.8 23 V26.5" stroke="#fff" stroke-width="2.6"/></svg>
<svg style="left:462px;top:775px" width="16" height="10"><path d="M2 7.5 L8 2 L14 7.5" fill="none" stroke="#9aa0a6" stroke-width="2"/></svg>
<svg style="left:506px;top:767px" width="30" height="24"><rect x="3.3" y="3.5" width="18" height="16.5" fill="none" stroke="#fff" stroke-width="2.6"/><path d="M21 9 L28 4 V19.5 L21 14.5 Z" fill="#fff"/></svg>
<svg style="left:581px;top:766px" width="31" height="27"><rect x="3" y="2.2" width="24" height="17.5" fill="none" stroke="#062e6f" stroke-width="2.3"/><path d="M1.5 23.8 H29" stroke="#062e6f" stroke-width="2.4"/><path d="M15 16 V11" stroke="#062e6f" stroke-width="2.4"/><path d="M10.5 12.2 L15 7.2 L19.5 12.2 Z" fill="#062e6f"/></svg>
<svg style="left:662px;top:765px" width="28" height="28"><circle cx="14" cy="14" r="11.5" fill="none" stroke="#fff" stroke-width="2.3"/><circle cx="9.5" cy="10.8" r="1.9" fill="#fff"/><circle cx="18.5" cy="10.8" r="1.9" fill="#fff"/><path d="M7.8 16 H20.2 Q19.5 20.5 14 20.5 Q8.5 20.5 7.8 16 Z" fill="#fff"/></svg>
<svg style="left:743px;top:767px" width="26" height="24"><rect x="2.9" y="3.5" width="20.2" height="16.6" rx="1.5" fill="none" stroke="#fff" stroke-width="3.4"/><path d="M12.3 9.3 H6.8 V14.7 H12.3 M20.3 9.3 H14.6 V14.7 H20.3" fill="none" stroke="#fff" stroke-width="2.6"/></svg>
<svg style="left:815px;top:760px" width="40" height="40"><path d="M16.2 9.5 V25.5 M20.9 6.5 V19.5 M26.2 7.5 V19.5" stroke="#fff" stroke-width="3.2" stroke-linecap="round" fill="none"/><path d="M31.5 10.5 V22 C31.5 28.5 27.5 31.5 22.5 31.5 C18.5 31.5 15.5 29.5 13.5 26.8 L9 20.5 L16.2 25.8" stroke="#fff" stroke-width="2.8" stroke-linecap="round" stroke-linejoin="round" fill="none"/></svg>
<svg style="left:898px;top:766px" width="11" height="26"><circle cx="5.4" cy="5.4" r="2.5" fill="#fff"/><circle cx="5.4" cy="13" r="2.5" fill="#fff"/><circle cx="5.4" cy="20.5" r="2.5" fill="#fff"/></svg>
<svg style="left:960px;top:766px" width="42" height="26"><path d="M6.2 14 Q12.5 8 21 7.8 Q29.5 8 35.8 14 L31.6 18.9 L25.6 15.8 V11.2 Q21 10.4 16.2 11.2 V15.8 L10.4 18.9 Z" fill="#fff" stroke="#fff" stroke-width="0.8" stroke-linejoin="round"/><circle cx="11.8" cy="14.2" r="0.9" fill="#7a2a26"/><circle cx="30.2" cy="14.2" r="0.9" fill="#7a2a26"/></svg>
<svg style="left:594px;top:371px;z-index:11" width="28" height="28"><path d="M7 2 H21 V4.5 H19 V12 L22.5 15.5 V17.5 H15.5 V25.5 H12.5 V17.5 H5.5 V15.5 L9 12 V4.5 H7 Z" fill="rgba(255,255,255,0.92)"/><path d="M2.5 2.5 L25.5 25.5" stroke="rgba(80,80,80,1)" stroke-width="3.2"/><path d="M2.5 2 L25.5 25" stroke="rgba(255,255,255,0.92)" stroke-width="2"/></svg>
<svg style="left:647px;top:372px;z-index:11" width="28" height="28"><path d="M3 4 L24 25" stroke="rgba(200,200,200,0.55)" stroke-width="2.2"/><circle cx="14" cy="14" r="9.5" fill="none" stroke="rgba(200,200,200,0.5)" stroke-width="2.2"/><path d="M8 17 Q14 9 21 15" fill="none" stroke="rgba(200,200,200,0.5)" stroke-width="2"/></svg>
<svg style="left:703px;top:371px;z-index:11" width="28" height="28"><circle cx="13.5" cy="13.7" r="11.2" fill="none" stroke="#fff" stroke-width="2.6"/><path d="M7 13.7 H20" stroke="#fff" stroke-width="2.4"/></svg>
<svg style="left:650px;top:679px;z-index:11" width="30" height="30"><path d="M13.5 3.5 H23.5 V13.5 M23 4 L5 22 M3.5 13.5 V23.5 H13.5" fill="none" stroke="#e8e8e8" stroke-width="2.6"/></svg>
<svg style="left:1043.5px;top:358.5px;z-index:12" width="9" height="13"><path d="M0.5 0.5 V10.5 L2.9 8.4 L4.6 12.2 L6.2 11.5 L4.5 7.8 H7.8 Z" fill="#000" stroke="#fff" stroke-width="0.7"/></svg>
</body></html>
